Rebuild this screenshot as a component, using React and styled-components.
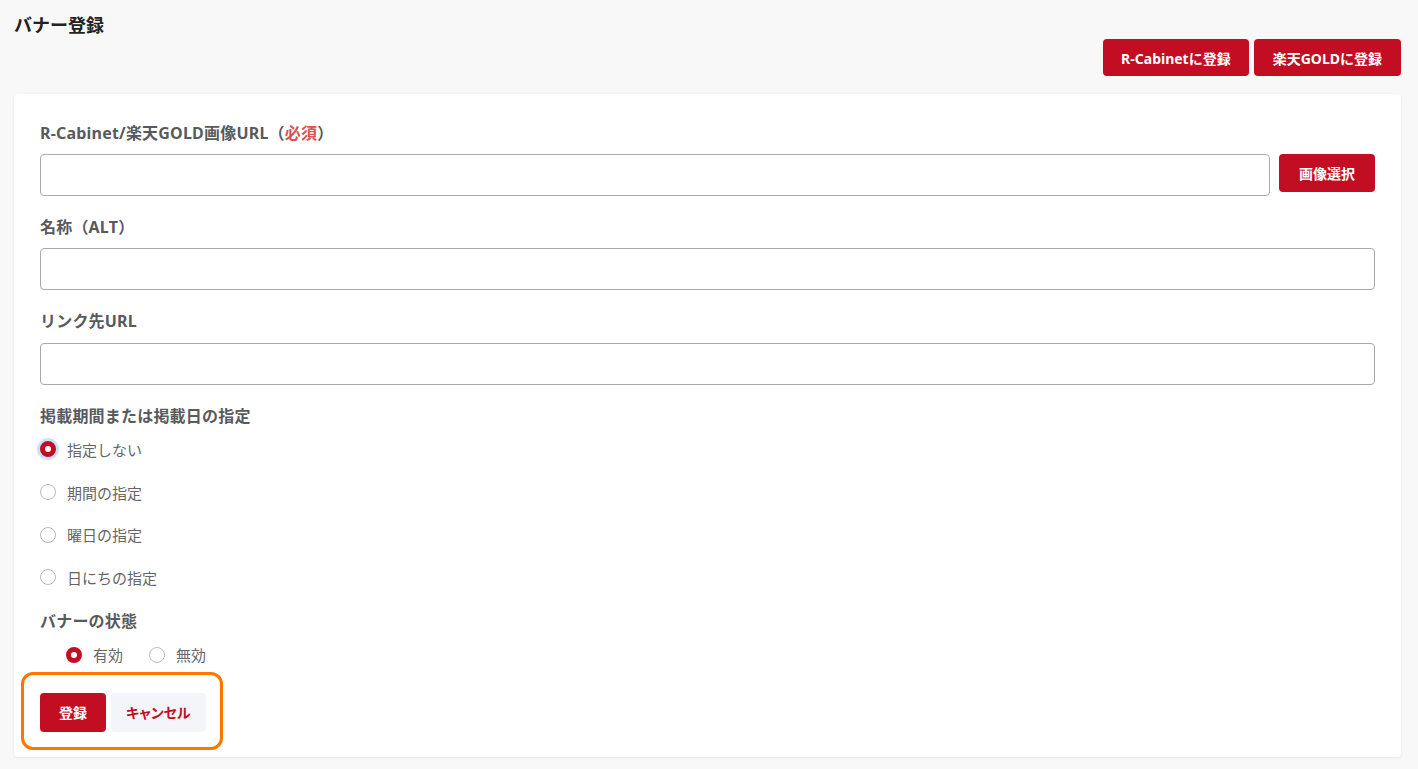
import React, { useState } from 'react';
import styled, { createGlobalStyle } from 'styled-components';

const GlobalStyle = createGlobalStyle`
  html, body {
    margin: 0;
    padding: 0;
    background: #f8f8f8;
  }
  body {
    font-family: "Noto Sans", "Noto Sans CJK JP", sans-serif;
  }
`;

const Page = styled.div`
  padding: 12px 17px 12px 14px;
  min-height: 769px;
  box-sizing: border-box;
`;

const Title = styled.h1`
  margin: 0;
  font-size: 18px;
  line-height: 27px;
  font-weight: 700;
  color: #222;
`;

const TopActions = styled.div`
  display: flex;
  justify-content: flex-end;
  gap: 5px;
`;

const RedButton = styled.button`
  height: ${p => p.h || 37}px;
  padding: 0 ${p => p.px || 18}px;
  border: none;
  border-radius: 4px;
  background: #c30d23;
  color: #fff;
  font-family: inherit;
  font-size: 14px;
  font-weight: 700;
  cursor: pointer;
  white-space: nowrap;
`;

const GhostButton = styled.button`
  height: 39px;
  padding: 0 15px;
  border: none;
  border-radius: 4px;
  background: #f4f4fb;
  color: #c30d23;
  font-family: inherit;
  font-size: 14px;
  font-weight: 700;
  font-feature-settings: "palt";
  cursor: pointer;
`;

const Card = styled.div`
  margin-top: 18px;
  background: #fff;
  border-radius: 4px;
  box-shadow: 0 1px 3px rgba(0, 0, 0, 0.08);
  padding: 28px 26px 7px 26px;
`;

const Label = styled.div`
  font-size: 16px;
  line-height: 22px;
  font-weight: 700;
  color: #585a5e;
  letter-spacing: 0.2px;
  margin-bottom: ${p => p.mb ?? 10}px;
`;

const Required = styled.span`
  color: #d9534f;
`;

const Field = styled.div`
  margin-bottom: 20px;
`;

const InputRow = styled.div`
  display: flex;
  align-items: flex-start;
  gap: 9px;
`;

const TextInput = styled.input`
  flex: 1;
  height: 42px;
  box-sizing: border-box;
  border: 1px solid #aaa;
  border-radius: 4px;
  padding: 0 12px;
  font-family: inherit;
  font-size: 15px;
  outline: none;
  background: #fff;
`;

const RadioList = styled.div`
  display: flex;
  flex-direction: column;
  margin-bottom: 11px;
`;

const RadioInline = styled.div`
  display: flex;
  gap: 26px;
  padding-left: 26px;
  margin-top: 12px;
`;

const RadioItem = styled.label`
  display: flex;
  align-items: center;
  gap: 11px;
  height: ${p => p.h || 42.7}px;
  font-size: 15px;
  color: #666;
  cursor: pointer;
`;

const Dot = styled.span`
  width: 16px;
  height: 16px;
  box-sizing: border-box;
  border-radius: 50%;
  flex-shrink: 0;
  border: ${p => (p.on ? '5px solid #c30d23' : '1px solid #bbb')};
  background: #fff;
  box-shadow: ${p => (p.focus ? '0 0 0 3px #cfe0fb' : 'none')};
`;

const ActionBox = styled.div`
  display: inline-flex;
  gap: 5px;
  margin: 6px 0 0 -19px;
  padding: 18px 14px 15px 16px;
  border: 3px solid #ff7500;
  border-radius: 12px;
`;

const periodOptions = ['指定しない', '期間の指定', '曜日の指定', '日にちの指定'];

function Radio({ checked, focus, label, onClick, h }) {
  return (
    <RadioItem h={h} onClick={onClick}>
      <Dot on={checked} focus={focus} />
      {label}
    </RadioItem>
  );
}

export default function App() {
  const [period, setPeriod] = useState(0);
  const [status, setStatus] = useState(0);

  return (
    <Page>
      <GlobalStyle />
      <Title>バナー登録</Title>
      <TopActions>
        <RedButton>R-Cabinetに登録</RedButton>
        <RedButton px={19}>楽天GOLDに登録</RedButton>
      </TopActions>

      <Card>
        <Field>
          <Label>R-Cabinet/楽天GOLD画像URL（<Required>必須</Required>）</Label>
          <InputRow>
            <TextInput />
            <RedButton h={38} px={20}>画像選択</RedButton>
          </InputRow>
        </Field>

        <Field>
          <Label>名称（ALT）</Label>
          <InputRow>
            <TextInput />
          </InputRow>
        </Field>

        <Field>
          <Label mb={11}>リンク先URL</Label>
          <InputRow>
            <TextInput />
          </InputRow>
        </Field>

        <Label mb={1}>掲載期間または掲載日の指定</Label>
        <RadioList>
          {periodOptions.map((opt, i) => (
            <Radio
              key={opt}
              label={opt}
              checked={period === i}
              focus={period === i && i === 0}
              onClick={() => setPeriod(i)}
            />
          ))}
        </RadioList>

        <Label mb={0}>バナーの状態</Label>
        <RadioInline>
          <Radio h={22} label="有効" checked={status === 0} onClick={() => setStatus(0)} />
          <Radio h={22} label="無効" checked={status === 1} onClick={() => setStatus(1)} />
        </RadioInline>

        <ActionBox>
          <RedButton h={39} px={19}>登録</RedButton>
          <GhostButton>キャンセル</GhostButton>
        </ActionBox>
      </Card>
    </Page>
  );
}
